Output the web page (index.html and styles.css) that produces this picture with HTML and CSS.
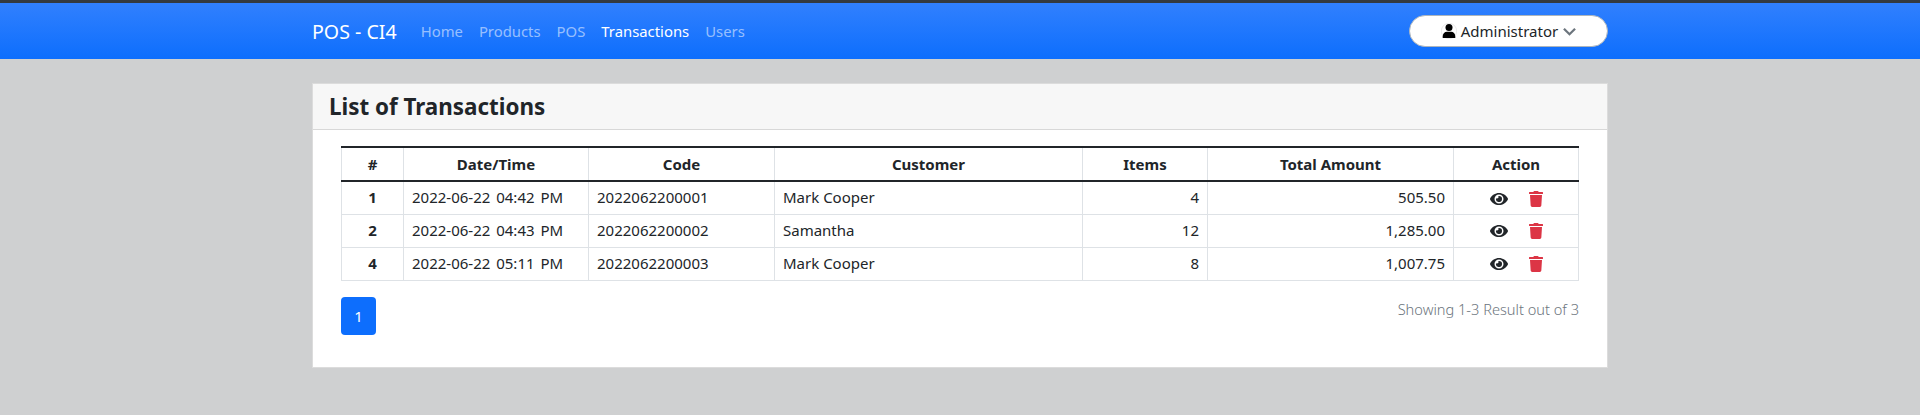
FILE: index.html
```html
<!DOCTYPE html>
<html lang="en">
<head>
<meta charset="utf-8">
<title>List of Transactions</title>
<link rel="stylesheet" href="styles.css">
</head>
<body>
<svg class="defs" aria-hidden="true">
  <symbol id="eye" viewBox="0 0 576 512"><path fill="#212529" d="M572.52 241.4C518.29 135.59 410.93 64 288 64S57.68 135.64 3.48 241.41a32.35 32.35 0 0 0 0 29.19C57.71 376.41 165.07 448 288 448s230.32-71.64 284.52-177.41a32.35 32.35 0 0 0 0-29.19zM288 400a144 144 0 1 1 144-144 143.93 143.93 0 0 1-144 144zm0-240a95.31 95.31 0 0 0-25.31 3.79 47.85 47.85 0 0 1-66.9 66.9A95.78 95.78 0 1 0 288 160z"/></symbol>
  <symbol id="trash" viewBox="0 0 448 512"><path fill="#dc3545" d="M432 32H312l-9.4-18.7A24 24 0 0 0 281.1 0H166.8a23.72 23.72 0 0 0-21.4 13.3L136 32H16A16 16 0 0 0 0 48v32a16 16 0 0 0 16 16h416a16 16 0 0 0 16-16V48a16 16 0 0 0-16-16zM53.2 467a48 48 0 0 0 47.9 45h245.8a48 48 0 0 0 47.9-45L416 128H32z"/></symbol>
</svg>
<nav class="navbar">
  <div class="container nav-inner">
    <a class="brand">POS - CI4</a>
    <ul class="nav-links">
      <li class="nav-link">Home</li>
      <li class="nav-link">Products</li>
      <li class="nav-link">POS</li>
      <li class="nav-link active">Transactions</li>
      <li class="nav-link">Users</li>
    </ul>
    <button class="user-btn">
      <svg class="user-icon" viewBox="0 0 16 16"><circle cx="8" cy="8" r="7.7" fill="#fff" stroke="#d5d5d5" stroke-width=".5"/><circle cx="8" cy="4.4" r="3.5" fill="#000"/><path d="M1.7 15v-1.6c0-2.8 2-4.7 4.2-4.7h4.2c2.2 0 4.2 1.9 4.2 4.7V15z" fill="#000"/></svg>
      <span>Administrator</span>
      <svg class="chevron" viewBox="0 0 14 9"><path d="M1 1.5l6 6 6-6" fill="none" stroke="#6c757d" stroke-width="2.4"/></svg>
    </button>
  </div>
</nav>
<main class="container page">
  <section class="card">
    <header class="card-header"><h1>List of Transactions</h1></header>
    <div class="card-body">
      <table class="tx-table">
        <colgroup>
          <col class="c1"><col class="c2"><col class="c3"><col class="c4"><col class="c5"><col class="c6"><col class="c7">
        </colgroup>
        <thead>
          <tr><th>#</th><th>Date/Time</th><th>Code</th><th>Customer</th><th>Items</th><th>Total Amount</th><th>Action</th></tr>
        </thead>
        <tbody>
          <tr><th>1</th><td class="date">2022-06-22 04:42 PM</td><td>2022062200001</td><td>Mark Cooper</td><td class="num">4</td><td class="num">505.50</td>
            <td class="actions"><svg class="ico"><use href="#eye"/></svg><svg class="ico trash"><use href="#trash"/></svg></td></tr>
          <tr><th>2</th><td class="date">2022-06-22 04:43 PM</td><td>2022062200002</td><td>Samantha</td><td class="num">12</td><td class="num">1,285.00</td>
            <td class="actions"><svg class="ico"><use href="#eye"/></svg><svg class="ico trash"><use href="#trash"/></svg></td></tr>
          <tr><th>4</th><td class="date">2022-06-22 05:11 PM</td><td>2022062200003</td><td>Mark Cooper</td><td class="num">8</td><td class="num">1,007.75</td>
            <td class="actions"><svg class="ico"><use href="#eye"/></svg><svg class="ico trash"><use href="#trash"/></svg></td></tr>
        </tbody>
      </table>
      <div class="table-foot">
        <a class="page-btn">1</a>
        <span class="showing">Showing 1-3 Result out of 3</span>
      </div>
    </div>
  </section>
</main>
</body>
</html>
```
FILE: styles.css
```css
* { box-sizing: border-box; }
html, body { margin: 0; height: 100%; }
body {
  background: #cfd0d1;
  color: #212529;
  font-family: "Noto Sans", "Open Sans", sans-serif;
  font-size: 15px;
  border-top: 3px solid #343a40;
  overflow: hidden;
}
.defs { display: none; }
.container { width: 1320px; margin: 0 auto; padding: 0 12px; }
.navbar {
  height: 56px;
  background: linear-gradient(180deg, #3180fe 0%, #0d6efd 100%);
}
.nav-inner { display: flex; align-items: center; height: 100%; }
.brand { color: #fff; font-size: 19.6px; margin-right: 16px; }
.nav-links { display: flex; list-style: none; margin: 0; padding: 0; flex: 1; }
.nav-link { color: rgba(255,255,255,.55); font-size: 14.85px; padding: 0 8px; }
.nav-link.active { color: #fff; }
.user-btn {
  width: 199px; height: 32px;
  display: flex; align-items: center; justify-content: center; gap: 4px;
  background: #fff; border: 1px solid #adb5bd; border-radius: 16px;
  color: #212529; font: inherit; font-size: 15px; padding: 0;
}
.user-icon { width: 16px; height: 16px; }
.chevron { width: 13px; height: 9px; margin-left: 1px; }
.page { padding-top: 24px; }
.card { background: #fff; border: 1px solid #dcdcdc; height: 285px; }
.card-header {
  background: #f7f7f7; border-bottom: 1px solid #d8d8d8;
  height: 46px; padding: 0 16px; display: flex; align-items: center;
}
.card-header h1 { margin: 0; font-size: 22.4px; font-weight: 700; }
.card-body { padding: 16px 28px; }
.tx-table { width: 1237px; border-collapse: collapse; table-layout: fixed; }
.c1 { width: 62px; } .c2 { width: 185px; } .c3 { width: 186px; } .c4 { width: 308px; }
.c5 { width: 125px; } .c6 { width: 246px; } .c7 { width: 125px; }
.tx-table th, .tx-table td { border: 1px solid #dee2e6; padding: 0 8px 2px; height: 33px; text-align: left; }
.tx-table th { text-align: center; font-weight: 700; }
.tx-table thead th { height: 34px; padding-bottom: 0; border-top: 2px solid #212529; border-bottom: 2px solid #212529; }
.tx-table .date { word-spacing: 2px; }
.tx-table .num { text-align: right; }
.tx-table .actions { padding: 0 0 2px; text-align: center; }
.ico { width: 18px; height: 16px; vertical-align: middle; }
.trash { width: 14px; margin-left: 21px; }
.table-foot { display: flex; justify-content: space-between; align-items: flex-start; margin-top: 16px; }
.page-btn {
  width: 35px; height: 38px; background: #0d6efd; color: #fff; border-radius: 4px;
  display: flex; align-items: center; justify-content: center;
}
.showing { color: #6c757d; font-weight: 300; font-size: 14.6px; margin-top: 2px; }
```
